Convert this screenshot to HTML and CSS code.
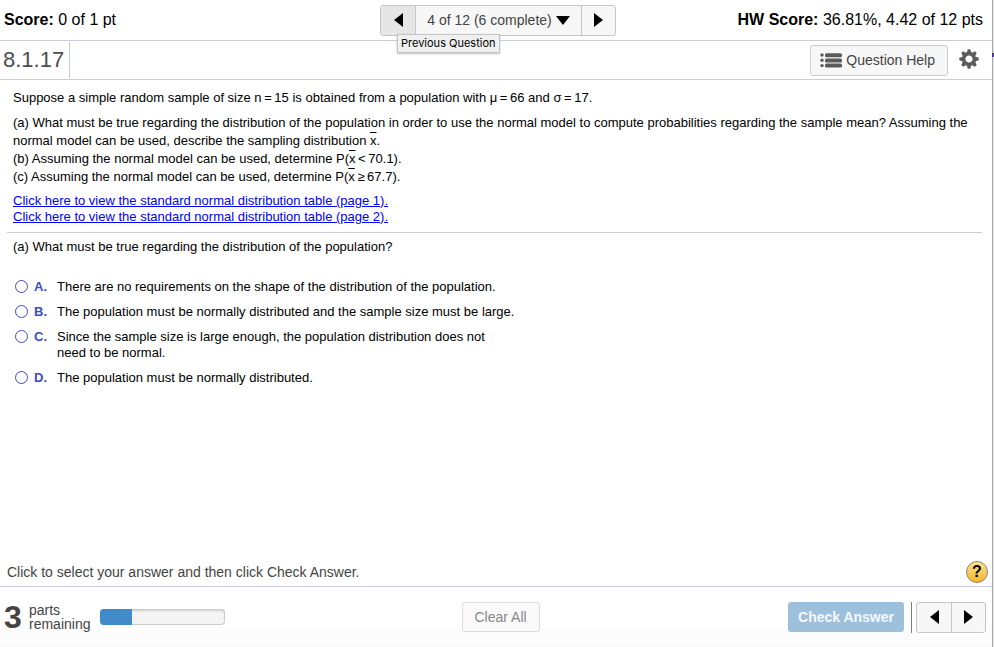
FILE: index.html
```
<!DOCTYPE html>
<html lang="en">
<head>
  <meta charset="UTF-8" />
  <meta name="viewport" content="width=device-width, initial-scale=1.0" />
  <title>Homework 8.1.17</title>
  <link rel="stylesheet" href="styles.css">
</head>
<body>
  <div class="page">
    <header class="score-bar">
      <div><b>Score:</b> 0 of 1 pt</div>
      <nav class="pager">
        <button type="button" class="hover" aria-label="Previous Question" aria-describedby="prev-tip">
          <svg width="9" height="14" viewBox="0 0 9 14"><path d="M9 0v14L0 7z" /></svg>
        </button>
        <button type="button" class="pager-list">
          4 of 12 (6 complete)
          <svg width="14" height="9" viewBox="0 0 14 9"><path d="M0 0h14L7 9z" /></svg>
        </button>
        <button type="button" aria-label="Next Question">
          <svg width="9" height="14" viewBox="0 0 9 14"><path d="M0 0v14l9-7z" /></svg>
        </button>
        <span class="tooltip" id="prev-tip" role="tooltip">Previous Question</span>
      </nav>
      <div class="hw-score"><b>HW Score:</b> 36.81%, 4.42 of 12 pts</div>
    </header>

    <div class="title-bar">
      <h1>8.1.17</h1>
      <button type="button" class="help-btn">
        <svg width="22" height="15" viewBox="0 0 22 15">
          <circle cx="2" cy="2" r="1.7" /><circle cx="2" cy="7.3" r="1.7" /><circle cx="2" cy="12.6" r="1.7" />
          <rect x="5" y="0.2" width="17" height="4" rx="1.5" />
          <rect x="5" y="5.4" width="17" height="4" rx="1.5" />
          <rect x="5" y="10.6" width="17" height="4" rx="1.5" />
        </svg>
        Question Help
      </button>
      <button type="button" class="gear-btn" aria-label="Settings">
        <svg width="20" height="20" viewBox="-10 -10 20 20">
          <circle r="5.4" fill="none" stroke="#5a5a5a" stroke-width="3.6" />
          <g id="teeth">
            <path id="tooth" d="M-2.2-6.6L-1.2-9.7H1.2L2.2-6.6z" />
            <use href="#tooth" transform="rotate(45)" />
            <use href="#tooth" transform="rotate(90)" />
            <use href="#tooth" transform="rotate(135)" />
          </g>
          <use href="#teeth" transform="rotate(180)" />
        </svg>
      </button>
    </div>

    <main class="content">
      <section class="question">
        <p>Suppose a simple random sample of size n&thinsp;=&thinsp;15 is obtained from a population with μ&thinsp;=&thinsp;66 and σ&thinsp;=&thinsp;17.</p>
        <p>
          (a) What must be true regarding the distribution of the population in order to use the normal model to compute probabilities regarding the sample mean? Assuming the normal model can be used, describe the sampling distribution <span class="bar">x</span>.<br />
          (b) Assuming the normal model can be used, determine P(<span class="bar">x</span>&thinsp;&lt;&thinsp;70.1).<br />
          (c) Assuming the normal model can be used, determine P(<span class="bar">x</span>&thinsp;≥&thinsp;67.7).
        </p>
        <p class="links">
          <a href="#">Click here to view the standard normal distribution table (page 1).</a><br />
          <a href="#">Click here to view the standard normal distribution table (page 2).</a>
        </p>
      </section>

      <form class="answers">
        <p>(a) What must be true regarding the distribution of the population?</p>
        <label>
          <input type="radio" name="answer" value="a" />
          <b>A.</b>
          <span>There are no requirements on the shape of the distribution of the population.</span>
        </label>
        <label>
          <input type="radio" name="answer" value="b" />
          <b>B.</b>
          <span>The population must be normally distributed and the sample size must be large.</span>
        </label>
        <label>
          <input type="radio" name="answer" value="c" />
          <b>C.</b>
          <span>Since the sample size is large enough, the population distribution does not<br />need to be normal.</span>
        </label>
        <label>
          <input type="radio" name="answer" value="d" />
          <b>D.</b>
          <span>The population must be normally distributed.</span>
        </label>
      </form>
    </main>

    <div class="hint-bar">
      <span>Click to select your answer and then click Check Answer.</span>
      <button type="button" class="info-btn" aria-label="Help">?</button>
    </div>

    <footer class="footer">
      <div class="parts">
        <strong>3</strong>
        <span>parts<br />remaining</span>
        <div class="progress"><div class="progress-fill" style="width: 25%"></div></div>
      </div>
      <button type="button" class="clear-btn">Clear All</button>
      <div class="actions">
        <button type="button" class="check-btn">Check Answer</button>
        <div class="step">
          <div class="pager">
            <button type="button" aria-label="Previous">
              <svg width="9" height="14" viewBox="0 0 9 14"><path d="M9 0v14L0 7z" /></svg>
            </button>
            <button type="button" aria-label="Next">
              <svg width="9" height="14" viewBox="0 0 9 14"><path d="M0 0v14l9-7z" /></svg>
            </button>
          </div>
        </div>
      </div>
    </footer>
  </div>
</body>
</html>
```
FILE: styles.css
```
* {
  box-sizing: border-box;
}

body {
  margin: 0;
  font-family: "Liberation Sans", Arial, sans-serif;
  font-size: 13px;
  color: #000;
  background: #e4e4e4;
}

button {
  font-family: inherit;
  cursor: pointer;
}

.page {
  position: relative;
  display: flex;
  flex-direction: column;
  min-height: 100vh;
  margin-right: 1px;
  border-right: 1px solid #a9a9a9;
  background: #fff;
}

/* marker on the window edge */
.page::after {
  content: "";
  position: absolute;
  top: 53px;
  right: -2px;
  width: 2px;
  height: 4px;
  background: #4b3a80;
}

.score-bar {
  display: grid;
  grid-template-columns: 1fr auto 1fr;
  align-items: center;
  height: 41px;
  padding-left: 4px;
  border-bottom: 1px solid #c8cbdd;
  font-size: 16px;
}

.hw-score {
  padding-right: 9px;
  text-align: right;
}

.pager {
  position: relative;
  display: flex;
  height: 31px;
  border: 1px solid #c6c6c6;
  border-radius: 3px;
  background: #f7f7f7;
}

.pager button {
  display: flex;
  align-items: center;
  justify-content: center;
  width: 34px;
  padding: 0;
  border: none;
  background: none;
}

.pager button + button {
  border-left: 1px solid #c6c6c6;
}

.pager .hover {
  background: #e6e6e6;
}

.pager .pager-list {
  gap: 4px;
  width: 166px;
  font-size: 14px;
  color: #444;
}

.tooltip {
  position: absolute;
  top: 28px;
  left: 16px;
  padding: 0 3px;
  border: 1px solid #c4c4c4;
  background: #f0f0f0;
  box-shadow: 0 1px 2px rgba(0, 0, 0, 0.25);
  font-family: Inter, sans-serif;
  font-size: 11px;
  line-height: 17px;
  white-space: nowrap;
}

.title-bar {
  display: flex;
  align-items: center;
  height: 39px;
  padding-right: 13px;
  border-bottom: 1px solid #c8cbdd;
}

.title-bar h1 {
  margin: 0 auto 0 0;
  padding: 0 5px 0 3px;
  border-right: 1px solid #c8cbdd;
  font-size: 22px;
  font-weight: normal;
  line-height: 36px;
  color: #4d4d4d;
}

.help-btn {
  display: flex;
  align-items: center;
  gap: 4px;
  height: 31px;
  margin-right: 11px;
  padding: 0 12px 0 9px;
  border: 1px solid #ccc;
  border-radius: 3px;
  background: #f7f7f7;
  font-size: 14px;
  color: #444;
}

.help-btn svg,
.gear-btn svg {
  display: block;
  fill: #5a5a5a;
}

.gear-btn {
  padding: 0 0 2px;
  border: none;
  background: none;
}

.content {
  flex: 1;
  padding: 9px 10px 0 7px;
}

.question {
  padding: 0 6px 7px;
  border-bottom: 1px solid #c8cbdd;
  line-height: 18px;
}

.question p {
  margin: 0 0 7px;
}

.question .links {
  margin: 0;
  line-height: 16px;
}

.links a {
  color: #00f;
}

.bar {
  text-decoration: overline;
}

.answers {
  padding: 6px;
  line-height: 16px;
}

.answers p {
  margin: 0 0 24px;
}

.answers label {
  display: flex;
  align-items: flex-start;
  width: 520px;
  max-width: 100%;
  margin-bottom: 9px;
}

.answers input {
  appearance: none;
  flex: none;
  width: 13px;
  height: 13px;
  margin: 1px 6px 0 2px;
  border: 1px solid #3c4cc8;
  border-radius: 50%;
}

.answers input:checked {
  background: #3c4cc8;
}

.answers b {
  flex: none;
  width: 23px;
  color: #3c4cc8;
}

.hint-bar {
  display: flex;
  align-items: center;
  justify-content: space-between;
  height: 30px;
  padding: 0 4px 0 7px;
  border-bottom: 1px solid #c8cbdd;
  font-size: 14px;
  color: #444;
}

.info-btn {
  width: 22px;
  height: 22px;
  padding: 0;
  border: 1px solid #8f8468;
  border-radius: 50%;
  background: linear-gradient(#ffe28a, #f2b632);
  font-size: 16px;
  font-weight: bold;
  line-height: 20px;
}

.footer {
  display: grid;
  grid-template-columns: 41fr auto 40fr;
  align-items: center;
  height: 60px;
  padding: 0 6px 0 4px;
  background: linear-gradient(#fff 60%, #fafafa);
}

.parts {
  display: flex;
  align-items: center;
  font-size: 14px;
  line-height: 14px;
  color: #444;
}

.parts strong {
  width: 25px;
  font-size: 32px;
}

.progress {
  width: 125px;
  height: 16px;
  margin-left: 10px;
  overflow: hidden;
  border-radius: 4px;
  background: #f4f4f4;
  box-shadow: inset 0 0 0 1px #ccc, inset 0 2px 2px rgba(0, 0, 0, 0.15);
}

.progress-fill {
  height: 100%;
  background: #428bca;
}

.clear-btn {
  width: 78px;
  height: 30px;
  padding: 0;
  border: 1px solid #ddd;
  border-radius: 3px;
  background: #fafafa;
  font-size: 14px;
  color: #888;
}

.actions {
  display: flex;
  align-items: center;
  justify-content: flex-end;
}

.check-btn {
  height: 30px;
  margin-right: 7px;
  padding: 0 10px;
  border: none;
  border-radius: 3px;
  background: #9dc1dd;
  font-size: 14px;
  font-weight: bold;
  color: #f5f8fb;
}

.step {
  padding-left: 4px;
  border-left: 1px solid #808080;
}
```
